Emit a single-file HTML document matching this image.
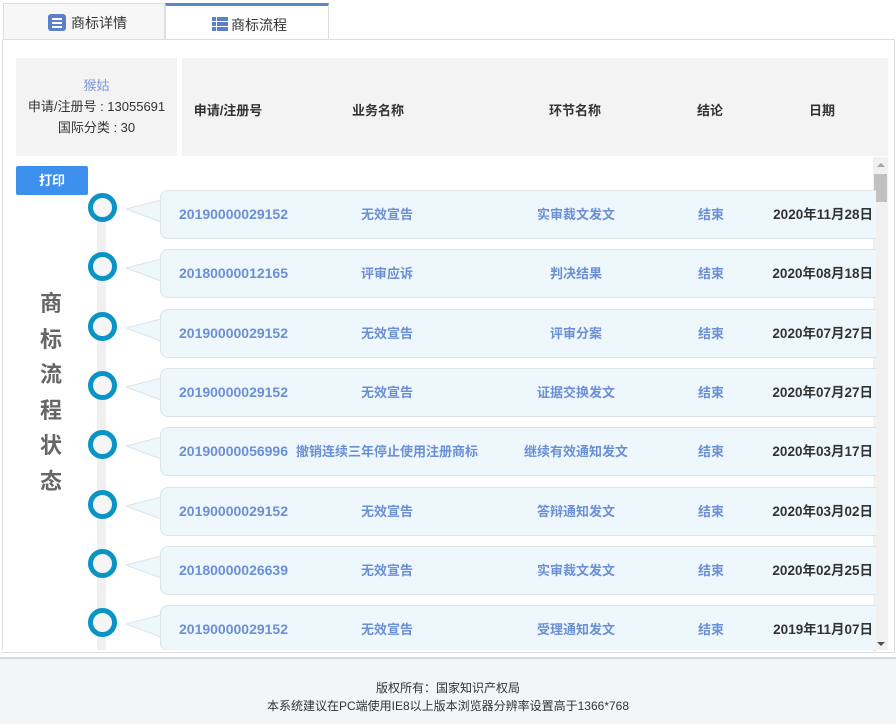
<!DOCTYPE html>
<html><head><meta charset="utf-8"><style>
*{margin:0;padding:0;box-sizing:border-box}
body{width:896px;height:724px;background:#fff;font-family:"Liberation Sans","Noto Sans CJK SC",sans-serif;font-size:13px;position:relative;overflow:hidden;color:#333}
.abs{position:absolute}
.tab1{left:3px;top:3px;width:162px;height:37px;background:#f7f7f7;border:1px solid #ddd;border-bottom:none;font-size:14px;color:#333}
.tab2{left:165px;top:3px;width:164px;height:37px;background:#fff;border:1px solid #ddd;border-top:3px solid #5b87cf;border-bottom:none;font-size:14px;color:#333}
.main{left:2px;top:39px;width:893px;height:614px;border:1px solid #ddd}
.hd{background:#f3f3f3}
.th{position:absolute;top:100px;font-weight:bold;font-size:13px;color:#333;transform:translateX(-50%)}
.row{position:absolute;left:160px;width:716px;height:49px;background:#eef7fb;border:1px solid #dde3e6;border-radius:8px;border-right:none;border-top-right-radius:0;border-bottom-right-radius:0}
.row span{position:absolute;top:0;line-height:47px;font-weight:bold;font-size:13px;color:#6b8fd6;white-space:nowrap}
.circ{position:absolute;left:88px;width:29px;height:29px;border:5px solid #0a94c6;border-radius:50%;background:#f5f5f5}
.c{transform:translateX(-50%)}
</style></head><body>
<div class="abs tab1"><svg class="abs" style="left:44px;top:10px" width="18" height="17"><rect x="0" y="0" width="18" height="17" rx="3" fill="#5b7fc8"/><rect x="4" y="4" width="10" height="2" fill="#fff"/><rect x="4" y="8" width="10" height="2" fill="#fff"/><rect x="4" y="12" width="10" height="2" fill="#fff"/></svg><span class="abs" style="left:67px;top:9px">商标详情</span></div>
<div class="abs tab2"><svg class="abs" style="left:46px;top:11px" width="16" height="14"><g fill="#5b7fc8"><rect x="0" y="0" width="4" height="4"/><rect x="5" y="0" width="11" height="4"/><rect x="0" y="5" width="4" height="4"/><rect x="5" y="5" width="11" height="4"/><rect x="0" y="10" width="4" height="4"/><rect x="5" y="10" width="11" height="4"/></g></svg><span class="abs" style="left:65px;top:9px">商标流程</span></div>
<div class="abs main"></div>
<div class="abs hd" style="left:16px;top:58px;width:161px;height:98px"></div>
<div class="abs hd" style="left:182px;top:58px;width:706px;height:98px"></div>
<div class="abs" style="left:16px;top:75px;width:161px;text-align:center;line-height:21px;font-size:13px;color:#333"><div style="color:#7b98d8">猴姑</div><div>申请/注册号 : 13055691</div><div>国际分类 : 30</div></div>
<div class="th" style="left:228px">申请/注册号</div>
<div class="th" style="left:378px">业务名称</div>
<div class="th" style="left:575px">环节名称</div>
<div class="th" style="left:710px">结论</div>
<div class="th" style="left:822px">日期</div>
<div class="abs" style="left:16px;top:166px;width:72px;height:29px;background:#3e90ee;border-radius:2px;color:#fff;font-weight:bold;text-align:center;line-height:29px;font-size:13px">打印</div>
<div class="abs" style="left:97px;top:195px;width:9px;height:455px;background:#f0f0f0"></div>
<div class="abs" style="left:38px;top:286px;width:26px;font-size:22px;font-weight:bold;color:#666;line-height:35.5px;text-align:center">商<br>标<br>流<br>程<br>状<br>态</div>
<div class="abs" style="left:873px;top:157px;width:15px;height:493px;background:#f1f1f1"><div style="position:absolute;left:1px;top:17px;width:13px;height:28px;background:#c1c1c1"></div><div style="position:absolute;left:4px;top:6px;border:4px solid transparent;border-bottom:4px solid #a3a3a3;border-top:none"></div><div style="position:absolute;left:4px;bottom:4px;border:4px solid transparent;border-top:4px solid #505050;border-bottom:none"></div></div>
<div id="rows"></div>
<div class="abs" style="left:0;top:657px;width:896px;height:67px;background:#f4f5f7;border-top:2px solid #d5dbe5;text-align:center;font-size:12px;color:#333;line-height:18px;padding-top:20px">版权所有：国家知识产权局<br>本系统建议在PC端使用IE8以上版本浏览器分辨率设置高于1366*768</div>
<div class="abs" style="left:2px;top:650px;width:871px;height:2px;background:#fff"></div>
<script>
var d=[["20190000029152","无效宣告","实审裁文发文","2020年11月28日"],["20180000012165","评审应诉","判决结果","2020年08月18日"],["20190000029152","无效宣告","评审分案","2020年07月27日"],["20190000029152","无效宣告","证据交换发文","2020年07月27日"],["20190000056996","撤销连续三年停止使用注册商标","继续有效通知发文","2020年03月17日"],["20190000029152","无效宣告","答辩通知发文","2020年03月02日"],["20180000026639","无效宣告","实审裁文发文","2020年02月25日"],["20190000029152","无效宣告","受理通知发文","2019年11月07日"]];
var h="";
d.forEach(function(r,i){var t=Math.round(190+i*59.3);var bh=i==7?Math.min(49,651-t):49;
h+='<div class="circ" style="top:'+(t+3)+'px"></div>';
h+='<svg class="abs" style="left:126px;top:'+(t+6)+'px" width="36" height="30"><polygon points="0,13 35,4 35,26" fill="#eef7fb"/><polyline points="35,4 0,13 35,26" fill="none" stroke="#dde3e6"/></svg>';
h+='<div class="row" style="top:'+t+'px;height:'+bh+'px"><span style="left:18px;font-size:14px">'+r[0]+'</span><span class="c" style="left:226px">'+r[1]+'</span><span class="c" style="left:415px">'+r[2]+'</span><span class="c" style="left:550px">结束</span><span style="right:3px;color:#333;font-size:13.5px">'+r[3]+'</span></div>';});
document.getElementById("rows").innerHTML=h;
</script>
</body></html>
